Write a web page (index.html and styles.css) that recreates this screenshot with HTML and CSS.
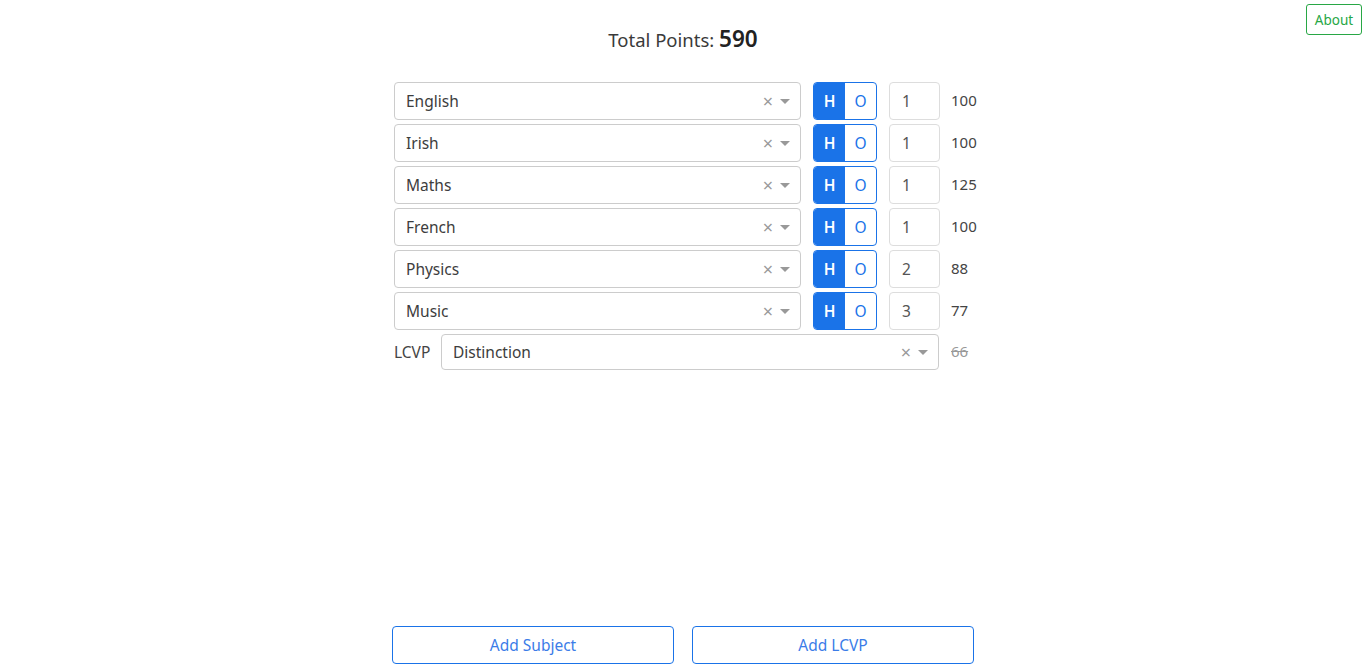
FILE: index.html
```html
<!DOCTYPE html>
<html>
<head>
<meta charset="utf-8">
<link rel="stylesheet" href="styles.css">
</head>
<body>
<button class="about">About</button>
<div class="page">
  <h1 class="total">Total Points: <span class="total-value">590</span></h1>
  <div class="rows">
    <div class="row">
      <div class="select"><span class="select-value">English</span><span class="clear">×</span><span class="caret"></span></div>
      <div class="toggle"><span class="tog on">H</span><span class="tog">O</span></div>
      <div class="grade">1</div>
      <div class="points">100</div>
    </div>
    <div class="row">
      <div class="select"><span class="select-value">Irish</span><span class="clear">×</span><span class="caret"></span></div>
      <div class="toggle"><span class="tog on">H</span><span class="tog">O</span></div>
      <div class="grade">1</div>
      <div class="points">100</div>
    </div>
    <div class="row">
      <div class="select"><span class="select-value">Maths</span><span class="clear">×</span><span class="caret"></span></div>
      <div class="toggle"><span class="tog on">H</span><span class="tog">O</span></div>
      <div class="grade">1</div>
      <div class="points">125</div>
    </div>
    <div class="row">
      <div class="select"><span class="select-value">French</span><span class="clear">×</span><span class="caret"></span></div>
      <div class="toggle"><span class="tog on">H</span><span class="tog">O</span></div>
      <div class="grade">1</div>
      <div class="points">100</div>
    </div>
    <div class="row">
      <div class="select"><span class="select-value">Physics</span><span class="clear">×</span><span class="caret"></span></div>
      <div class="toggle"><span class="tog on">H</span><span class="tog">O</span></div>
      <div class="grade">2</div>
      <div class="points">88</div>
    </div>
    <div class="row">
      <div class="select"><span class="select-value">Music</span><span class="clear">×</span><span class="caret"></span></div>
      <div class="toggle"><span class="tog on">H</span><span class="tog">O</span></div>
      <div class="grade">3</div>
      <div class="points">77</div>
    </div>
    <div class="row lcvp-row">
      <span class="lcvp-label">LCVP</span>
      <div class="select lcvp-select"><span class="select-value">Distinction</span><span class="clear">×</span><span class="caret"></span></div>
      <div class="points struck">66</div>
    </div>
  </div>
  <div class="actions">
    <button class="action">Add Subject</button>
    <button class="action">Add LCVP</button>
  </div>
</div>
</body>
</html>
```

FILE: styles.css
```css
* { box-sizing: border-box; }
html, body { margin: 0; padding: 0; }
body {
  font-family: "Noto Sans", "Open Sans", sans-serif;
  color: #333;
  background: #fff;
}
.about {
  position: absolute;
  top: 4px;
  right: 4px;
  width: 56px;
  height: 31px;
  padding: 0;
  border: 1px solid #28a745;
  border-radius: 3px;
  background: #fff;
  color: #28a745;
  font-family: inherit;
  font-size: 13.5px;
}
.page {
  display: flex;
  flex-direction: column;
  align-items: center;
  min-height: 672px;
}
.total {
  margin: 24px 0 0;
  height: 30px;
  font-size: 18.5px;
  font-weight: 400;
  color: #3a3a3a;
  line-height: 30px;
}
.total-value {
  font-size: 22.5px;
  font-weight: 600;
  color: #222;
}
.rows {
  width: 582px;
  padding-left: 2px;
  margin-top: 28px;
  display: flex;
  flex-direction: column;
  gap: 4px;
}
.row {
  display: flex;
  align-items: center;
  height: 38px;
}
.row > * { flex-shrink: 0; }
.select {
  width: 407px;
  height: 38px;
  border: 1px solid #ccc;
  border-radius: 4px;
  display: flex;
  align-items: center;
  padding: 0 10px 0 11px;
  font-size: 15.5px;
  color: #3d3d3d;
}
.select-value { flex: 1; }
.clear {
  color: #999;
  font-size: 18px;
  margin-right: 7px;
  line-height: 1;
}
.caret {
  width: 0;
  height: 0;
  border-left: 5px solid transparent;
  border-right: 5px solid transparent;
  border-top: 5px solid #999;
}
.toggle {
  margin-left: 12px;
  width: 64px;
  height: 38px;
  border: 1px solid #1a73e8;
  border-radius: 4px;
  display: flex;
  overflow: hidden;
}
.tog {
  flex: 1;
  display: flex;
  align-items: center;
  justify-content: center;
  font-size: 15.5px;
  color: #1a73e8;
}
.tog.on {
  background: #1a73e8;
  color: #fff;
  font-weight: 600;
}
.grade {
  margin-left: 12px;
  width: 51px;
  height: 38px;
  border: 1px solid #ddd;
  border-radius: 4px;
  display: flex;
  align-items: center;
  padding-left: 12px;
  font-size: 15.5px;
  color: #555;
}
.points {
  margin-left: 11px;
  font-size: 15px;
  color: #444;
  margin-top: -2px;
}
.lcvp-row { height: 36px; }
.lcvp-label {
  width: 47px;
  font-size: 15.5px;
  color: #444;
}
.lcvp-select {
  width: 498px;
  height: 36px;
}
.points.struck {
  color: #999;
  text-decoration: line-through;
  margin-left: 12px;
}
.actions {
  margin-top: auto;
  margin-bottom: 8px;
  display: flex;
  gap: 18px;
}
.action {
  width: 282px;
  height: 38px;
  border: 1px solid #1a73e8;
  border-radius: 4px;
  background: #fff;
  color: #3b7ce8;
  font-family: inherit;
  font-size: 15.5px;
}
```
